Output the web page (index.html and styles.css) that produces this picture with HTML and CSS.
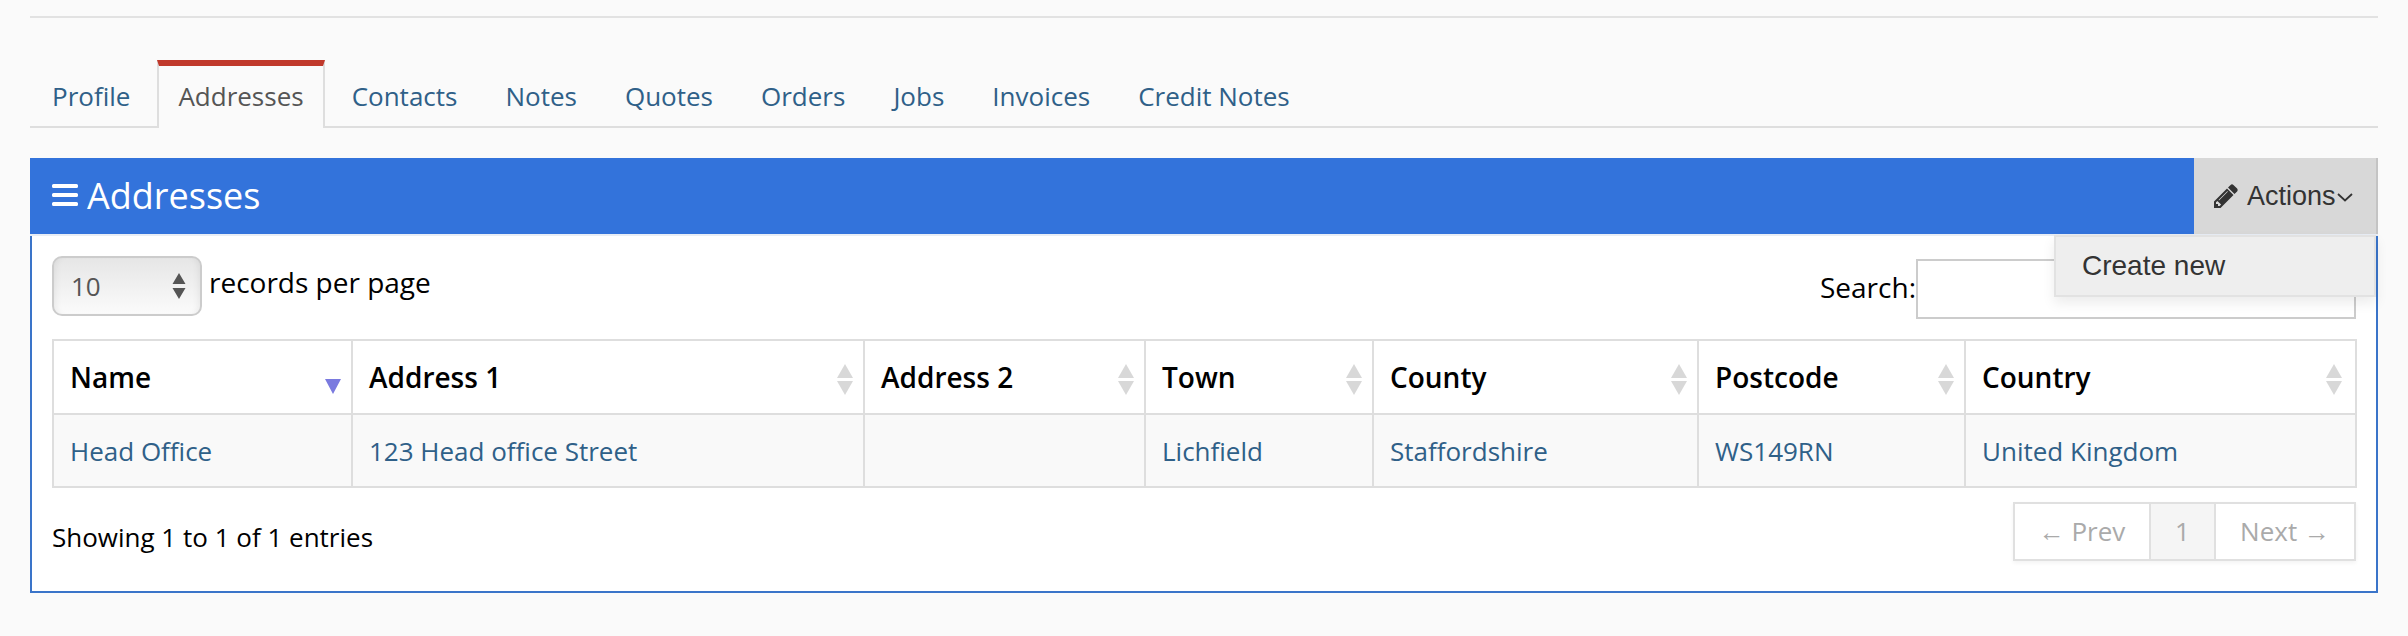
FILE: index.html
```html
<!DOCTYPE html>
<html lang="en">
<head>
    <meta charset="UTF-8">
    <title>Addresses</title>
    <link rel="stylesheet" href="styles.css">
</head>
<body>

<div class="page">
    <hr class="top-rule">

    <!-- Tabs -->
    <ul class="tabs">
        <li class="tab tab-first"><a href="#">Profile</a></li>
        <li class="tab active"><a href="#">Addresses</a></li>
        <li class="tab"><a href="#">Contacts</a></li>
        <li class="tab"><a href="#">Notes</a></li>
        <li class="tab"><a href="#">Quotes</a></li>
        <li class="tab"><a href="#">Orders</a></li>
        <li class="tab"><a href="#">Jobs</a></li>
        <li class="tab"><a href="#">Invoices</a></li>
        <li class="tab"><a href="#">Credit Notes</a></li>
    </ul>

    <div class="panel">
        <div class="panel-header">
            <h2 class="panel-title">
                <svg class="icon-bars" viewBox="0 0 26 22"><path d="M0 1.5A1.500 1.500 0 0 1 1.500 0h23A1.500 1.500 0 0 1 26 1.500v1A1.500 1.500 0 0 1 24.500 4h-23A1.500 1.500 0 0 1 0 2.500zM0 10.500A1.500 1.500 0 0 1 1.500 9h23a1.500 1.500 0 0 1 1.500 1.500v1a1.500 1.500 0 0 1-1.500 1.500h-23A1.500 1.500 0 0 1 0 11.500zM0 19.500A1.500 1.500 0 0 1 1.500 18h23a1.500 1.500 0 0 1 1.500 1.500v1a1.500 1.500 0 0 1-1.500 1.500h-23A1.500 1.500 0 0 1 0 20.500z"/></svg>
                Addresses
            </h2>
            <div class="actions">
                <svg class="icon-pencil" viewBox="128 128 1536 1536"><path d="M491 1536l91-91-235-235-91 91v107h128v128h107zm523-928q0-22-22-22-10 0-17 7l-542 542q-7 7-7 17 0 22 22 22 10 0 17-7l542-542q7-7 7-17zm-54-192l416 416-832 832h-416v-416zm683 96q0 53-37 90l-166 166-416-416 166-165q36-38 90-38 53 0 91 38l235 234q37 39 37 91z"/></svg>
                <span>Actions</span>
                <svg class="icon-chevron" viewBox="0 0 16 9"><path d="M1 1l7 6.500L15 1"/></svg>
                <div class="actions-menu"><a href="#">Create new</a></div>
            </div>
        </div>

        <div class="panel-body">
            <div class="table-top">
                <div class="length">
                    <div class="fake-select">
                        <span>10</span>
                        <svg class="select-arrows" viewBox="0 0 14 26"><path d="M7 0l6.500 11H.5zM7 26L.5 15h13z"/></svg>
                    </div>
                    <span>records per page</span>
                </div>
                <div class="search">
                    <label>Search:</label>
                    <input type="text" class="search-input">
                </div>
            </div>

            <table class="data-table">
                <colgroup>
                    <col class="col-name">
                    <col class="col-address1">
                    <col class="col-address2">
                    <col class="col-town">
                    <col class="col-county">
                    <col class="col-postcode">
                    <col class="col-country">
                </colgroup>
                <thead>
                    <tr>
                        <th class="sorted">Name</th>
                        <th>Address 1</th>
                        <th>Address 2</th>
                        <th>Town</th>
                        <th>County</th>
                        <th>Postcode</th>
                        <th>Country</th>
                    </tr>
                </thead>
                <tbody>
                    <tr>
                        <td><a href="#">Head Office</a></td>
                        <td><a href="#">123 Head office Street</a></td>
                        <td></td>
                        <td><a href="#">Lichfield</a></td>
                        <td><a href="#">Staffordshire</a></td>
                        <td><a href="#">WS149RN</a></td>
                        <td><a href="#">United Kingdom</a></td>
                    </tr>
                </tbody>
            </table>

            <div class="table-bottom">
                <div class="info">Showing 1 to 1 of 1 entries</div>
                <div class="pagination">
                    <a class="page-link page-prev" href="#"><span class="page-arrow">←</span> Prev</a>
                    <a class="page-link page-current" href="#">1</a>
                    <a class="page-link page-next" href="#">Next <span class="page-arrow">→</span></a>
                </div>
            </div>
        </div>
    </div>
</div>

</body>
</html>
```

FILE: styles.css
```css
* {
    box-sizing: border-box;
}
body {
    margin: 0;
    background-color: #fafafa;
    font-family: 'Open Sans', sans-serif;
    font-size: 26px;
    color: #000;
}
a {
    color: #2f6088;
    text-decoration: none;
}
.page {
    padding: 16px 30px 0;
}
.top-rule {
    margin: 0;
    height: 2px;
    border: none;
    background-color: #e2e2e2;
}

/* Tabs */
.tabs {
    display: flex;
    list-style: none;
    margin: 42px 0 30px;
    padding: 0;
    height: 68px;
    border-bottom: 2px solid #dedede;
}
.tab {
    padding: 18px 22px 0;
    margin-right: 4px;
    line-height: 36px;
}
.tab-first {
    margin-right: 5px;
}
.tab.active {
    height: 68px;
    margin-right: 5px;
    padding: 12px 19px 0;
    background-color: #fafafa;
    border-top: 6px solid #c0392b;
    border-left: 2px solid #dedede;
    border-right: 2px solid #dedede;
}
.tab.active a {
    color: #555;
}

/* Panel */
.panel {
    border: 2px solid #3a74c9;
    border-top: none;
    background-color: #fff;
    height: 435px;
}
.panel-header {
    display: flex;
    justify-content: space-between;
    height: 78px;
    margin: 0 -2px;
    background-color: #3373db;
    border-bottom: 2px solid #e8edf5;
}
.panel-title {
    display: flex;
    align-items: center;
    gap: 9px;
    height: 76px;
    margin: 0;
    padding: 0 0 2px 22px;
    font-size: 36px;
    font-weight: 400;
    color: #fff;
}
.icon-bars {
    width: 26px;
    height: 22px;
    fill: #fff;
}
.actions {
    position: relative;
    display: flex;
    align-items: center;
    width: 184px;
    height: 76px;
    padding-left: 20px;
    background-color: #d8d8d8;
    border-right: 2px solid #c4c4c4;
    font-family: 'Liberation Sans', sans-serif;
    font-size: 27px;
    color: #333;
}
.icon-pencil {
    width: 24px;
    height: 24px;
    margin-right: 9px;
    fill: #333;
}
.icon-chevron {
    width: 16px;
    height: 9px;
    margin: 2px 0 0 1px;
    fill: none;
    stroke: #333;
    stroke-width: 1.800;
}
.actions-menu {
    position: absolute;
    top: 77px;
    right: 0;
    width: 322px;
    height: 62px;
    padding-left: 26px;
    background-color: #eee;
    border: 2px solid #e2e2e2;
    box-shadow: 0 6px 12px rgba(0, 0, 0, 0.08);
    font-size: 28px;
    line-height: 57px;
}
.actions-menu a {
    color: #333;
}
.panel-body {
    padding: 0 20px;
}

/* Length and search */
.table-top {
    display: flex;
    justify-content: space-between;
    height: 103px;
}
.length {
    display: flex;
    align-items: flex-start;
    gap: 7px;
    padding-top: 20px;
    font-size: 28px;
    line-height: 53px;
}
.fake-select {
    display: flex;
    justify-content: space-between;
    align-items: center;
    width: 150px;
    height: 60px;
    padding: 0 14px 0 17px;
    border: 2px solid #ccc;
    border-radius: 10px;
    background: linear-gradient(#e6e6e6, #fbfbfb);
    box-shadow: inset 6px 0 6px -4px rgba(0, 0, 0, 0.06), inset -6px 0 6px -4px rgba(0, 0, 0, 0.06);
    font-size: 26px;
    color: #555;
}
.select-arrows {
    width: 14px;
    height: 26px;
    fill: #555;
}
.search {
    display: flex;
    align-items: flex-start;
    padding-top: 23px;
    font-size: 28px;
    line-height: 56px;
}
.search-input {
    width: 440px;
    height: 60px;
    border: 2px solid #ccc;
    background-color: #fff;
}

/* Table */
.data-table {
    width: 2303px;
    height: 147px;
    border-collapse: collapse;
    table-layout: fixed;
}
.col-name { width: 299px; }
.col-address1 { width: 512px; }
.col-address2 { width: 281px; }
.col-town { width: 228px; }
.col-county { width: 325px; }
.col-postcode { width: 267px; }
.col-country { width: 391px; }
.data-table th,
.data-table td {
    border: 2px solid #dedede;
    padding: 0 16px;
    text-align: left;
}
.data-table th {
    position: relative;
    height: 74px;
    font-size: 28px;
    font-weight: 600;
    background-color: #fff;
}
.data-table th::before,
.data-table th::after {
    content: "";
    position: absolute;
    right: 10px;
    border-left: 8px solid transparent;
    border-right: 8px solid transparent;
}
.data-table th:last-child::before,
.data-table th:last-child::after {
    right: 13px;
}
.data-table th::before {
    top: 23px;
    border-bottom: 14px solid #d8d8d8;
}
.data-table th::after {
    top: 40px;
    border-top: 14px solid #d8d8d8;
}
.data-table th.sorted::before {
    display: none;
}
.data-table th.sorted::after {
    top: 38px;
    border-top: 15px solid #7a7adf;
}
.data-table td {
    height: 73px;
    background-color: #f9f9f9;
}

/* Footer of the table */
.table-bottom {
    display: flex;
    justify-content: space-between;
    margin-top: 14px;
}
.info {
    padding-top: 15px;
    line-height: 40px;
}
.pagination {
    display: flex;
    height: 59px;
    border: 2px solid #e0e0e0;
    box-shadow: 0 2px 4px rgba(0, 0, 0, 0.05);
}
.page-link {
    line-height: 54px;
    text-align: center;
    color: #aaa;
}
.page-arrow {
    font-family: 'Liberation Sans', sans-serif;
}
.page-prev {
    width: 134px;
}
.page-current {
    width: 67px;
    background-color: #f5f5f5;
    border-left: 2px solid #e0e0e0;
    border-right: 2px solid #e0e0e0;
}
.page-next {
    width: 138px;
}
```
